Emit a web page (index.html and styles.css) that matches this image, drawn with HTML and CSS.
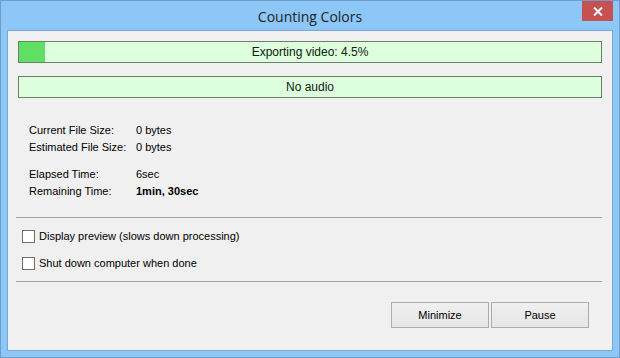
FILE: index.html
```html
<!DOCTYPE html>
<html lang="en">
<head>
    <meta charset="UTF-8">
    <title>Counting Colors</title>
    <link rel="stylesheet" href="styles.css">
</head>
<body>
    <div class="window">
        <div class="titlebar">
            <span class="title">Counting Colors</span>
            <div class="close">
                <svg width="10" height="9" viewBox="0 0 10 9"><path d="M1 0.5 L9 8.5 M9 0.5 L1 8.5" stroke="#fff" stroke-width="2"/></svg>
            </div>
        </div>
        <div class="client">
            <div class="bar">
                <div class="bar-fill" style="width: 4.5%"></div>
                <span class="bar-text">Exporting video: 4.5%</span>
            </div>
            <div class="bar">
                <span class="bar-text">No audio</span>
            </div>

            <div class="stats">
                <div class="stat-group">
                    <div class="row"><span class="label">Current File Size:</span><span>0 bytes</span></div>
                    <div class="row"><span class="label">Estimated File Size:</span><span>0 bytes</span></div>
                </div>
                <div class="stat-group">
                    <div class="row"><span class="label">Elapsed Time:</span><span>6sec</span></div>
                    <div class="row"><span class="label">Remaining Time:</span><span class="bold">1min, 30sec</span></div>
                </div>
            </div>

            <hr class="sep">
            <div class="options">
                <label class="check"><span class="box"></span>Display preview (slows down processing)</label>
                <label class="check"><span class="box"></span>Shut down computer when done</label>
            </div>
            <hr class="sep">

            <div class="buttons">
                <button class="btn">Minimize</button>
                <button class="btn">Pause</button>
            </div>
        </div>
    </div>
</body>
</html>
```

FILE: styles.css
```css
* {
    margin: 0;
    padding: 0;
    box-sizing: border-box;
}

body {
    font-family: "Liberation Sans", Arial, sans-serif;
    font-size: 11px;
    color: #000;
    background: #fff;
}

.window {
    width: 620px;
    height: 358px;
    border: 1px solid #6f9dcb;
    background: #8cc7f8;
    padding: 0 6px 6px;
    display: flex;
    flex-direction: column;
}

.titlebar {
    height: 29px;
    position: relative;
    display: flex;
    justify-content: center;
    align-items: center;
}

.title {
    font-family: "Open Sans", "Noto Sans", sans-serif;
    font-size: 14px;
    color: #1e1e1e;
    margin-top: 1px;
}

.close {
    position: absolute;
    top: 0;
    right: 0;
    width: 31px;
    height: 20px;
    background: #c75050;
    display: flex;
    justify-content: center;
    align-items: center;
}

.client {
    flex: 1;
    border: 1px solid #79a8d7;
    background: #f0f0f0;
    padding: 10px 10px 0 10px;
}

.bar {
    position: relative;
    height: 22px;
    border: 1px solid #6b806b;
    background: #ddffdd;
    margin-bottom: 13px;
    display: flex;
    justify-content: center;
    align-items: center;
}

.bar-fill {
    position: absolute;
    left: 0;
    top: 0;
    bottom: 0;
    background: #5fe064;
}

.bar-text {
    position: relative;
    font-size: 12px;
    color: #102010;
}

.stats {
    padding: 11px 0 7px 11px;
}

.stat-group {
    margin-bottom: 10px;
}

.row {
    display: flex;
    line-height: 17px;
}

.label {
    width: 107px;
}

.bold {
    font-weight: bold;
}

.sep {
    border: none;
    border-top: 1px solid #a0a0a0;
    margin-left: -2px;
}

.options {
    padding: 11px 0 11px 4px;
}

.check {
    display: flex;
    align-items: center;
    height: 14px;
    margin-bottom: 13px;
}

.check:last-of-type {
    margin-bottom: 0;
}

.box {
    width: 13px;
    height: 13px;
    border: 1px solid #707070;
    background: #fff;
    margin-right: 4px;
}

.buttons {
    display: flex;
    justify-content: flex-end;
    gap: 2px;
    padding: 20px 13px 0 0;
}

.btn {
    width: 98px;
    height: 26px;
    border: 1px solid #acacac;
    background: linear-gradient(#f0f0f0, #e5e5e5);
    font-family: "Liberation Sans", Arial, sans-serif;
    font-size: 11px;
    color: #000;
}
```
